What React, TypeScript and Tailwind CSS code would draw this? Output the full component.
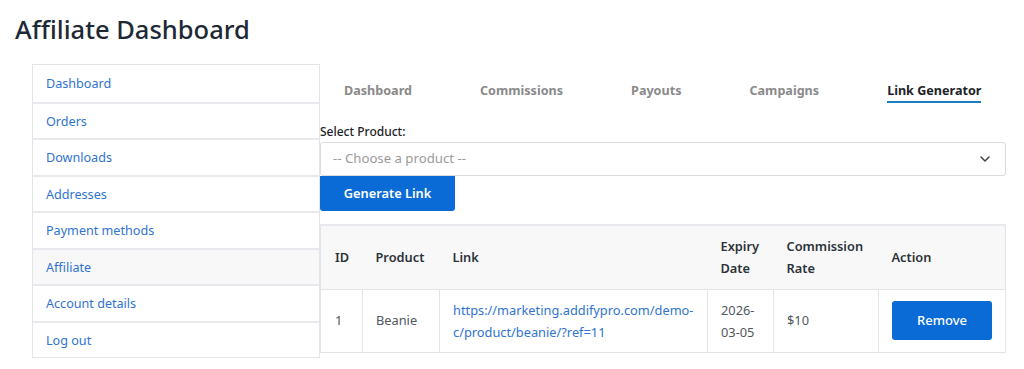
import React from 'react';
import { ChevronDown } from 'lucide-react';

const menu = ['Dashboard', 'Orders', 'Downloads', 'Addresses', 'Payment methods', 'Affiliate', 'Account details', 'Log out'];
const tabs = ['Dashboard', 'Commissions', 'Payouts', 'Campaigns', 'Link Generator'];

function App() {
  return (
    <div className="min-h-screen bg-white text-[#1d2327]" style={{ fontFamily: '"Noto Sans", "Open Sans", sans-serif' }}>
      <h1 className="pl-[15px] pt-[10px] text-[25.5px] leading-[38px] font-medium text-[#1d2936]">Affiliate Dashboard</h1>

      <div className="flex pl-[32px] pt-[16px] pr-[18px]">
        {/* Sidebar */}
        <nav className="w-[288px] shrink-0 border border-[#e2e4e7] self-start">
          {menu.map((item, i) => (
            <div
              key={item}
              className={`h-[36.5px] flex items-center pl-[13px] pt-[3px] text-[12.6px] text-[#2f74d0] ${
                i > 0 ? 'border-t-2 border-[#e8e9ec]' : ''
              } ${item === 'Affiliate' ? 'bg-[#f8f8f9]' : ''}`}
            >
              {item}
            </div>
          ))}
        </nav>

        {/* Content */}
        <div className="flex-1 min-w-0">
          <div className="flex gap-[68px] pl-[24px] pt-[16px] h-[39px]">
            {tabs.map((t) => (
              <div
                key={t}
                className={`text-[12.6px] font-bold leading-[22px] h-[23px] ${
                  t === 'Link Generator' ? 'text-[#1d2327] border-b-2 border-[#1a7fc1]' : 'text-[#8a8a8a]'
                }`}
              >
                {t}
              </div>
            ))}
          </div>

          <label className="block mt-[20px] text-[12px] leading-[18px] font-medium text-[#1d2327]">Select Product:</label>
          <div className="mt-[1px] h-[34px] border border-[#dcdcde] rounded-[3px] flex items-center justify-between pl-[12px] pr-[12px]">
            <span className="text-[13.2px] text-[#9a9a9a]">-- Choose a product --</span>
            <ChevronDown className="w-[16px] h-[16px] text-[#3c434a]" strokeWidth={2.2} />
          </div>
          <button className="w-[135px] h-[35px] bg-[#0a6bd6] text-white text-[12.8px] font-semibold rounded-b-[3px]">
            Generate Link
          </button>

          <table className="mt-[13px] w-full border border-[#e2e4e7] border-collapse text-[12.8px]">
            <thead>
              <tr className="bg-[#f8f8f8] border-t-2 border-[#e8e9ec] h-[64px] text-left text-[#2c3338] font-semibold">
                <th className="pl-[14px] w-[42px] font-semibold">ID</th>
                <th className="pl-[13px] w-[77px] font-semibold">Product</th>
                <th className="pl-[13px] w-[268px] font-semibold">Link</th>
                <th className="pl-[13px] w-[66px] font-semibold leading-[22px]">Expiry<br />Date</th>
                <th className="pl-[13px] w-[105px] font-semibold leading-[22px]">Commission<br />Rate</th>
                <th className="pl-[13px] font-semibold">Action</th>
              </tr>
            </thead>
            <tbody>
              <tr className="h-[63px] border-t border-[#e2e4e7] text-[#50575e]">
                <td className="pl-[14px]">1</td>
                <td className="pl-[13px] border-l border-[#e2e4e7]">Beanie</td>
                <td className="pl-[13px] pr-[8px] border-l border-[#e2e4e7] leading-[22px]">
                  <a className="text-[#2f74d0]" href="#">https://marketing.addifypro.com/demo-<br />c/product/beanie/?ref=11</a>
                </td>
                <td className="pl-[13px] border-l border-[#e2e4e7] leading-[22px]">2026-<br />03-05</td>
                <td className="pl-[13px] border-l border-[#e2e4e7]">$10</td>
                <td className="pl-[13px] border-l border-[#e2e4e7]">
                  <button className="w-[100px] h-[39px] bg-[#0a6bd6] text-white text-[13px] font-medium rounded-[3px]">
                    Remove
                  </button>
                </td>
              </tr>
            </tbody>
          </table>
        </div>
      </div>
    </div>
  );
}

export default App;
